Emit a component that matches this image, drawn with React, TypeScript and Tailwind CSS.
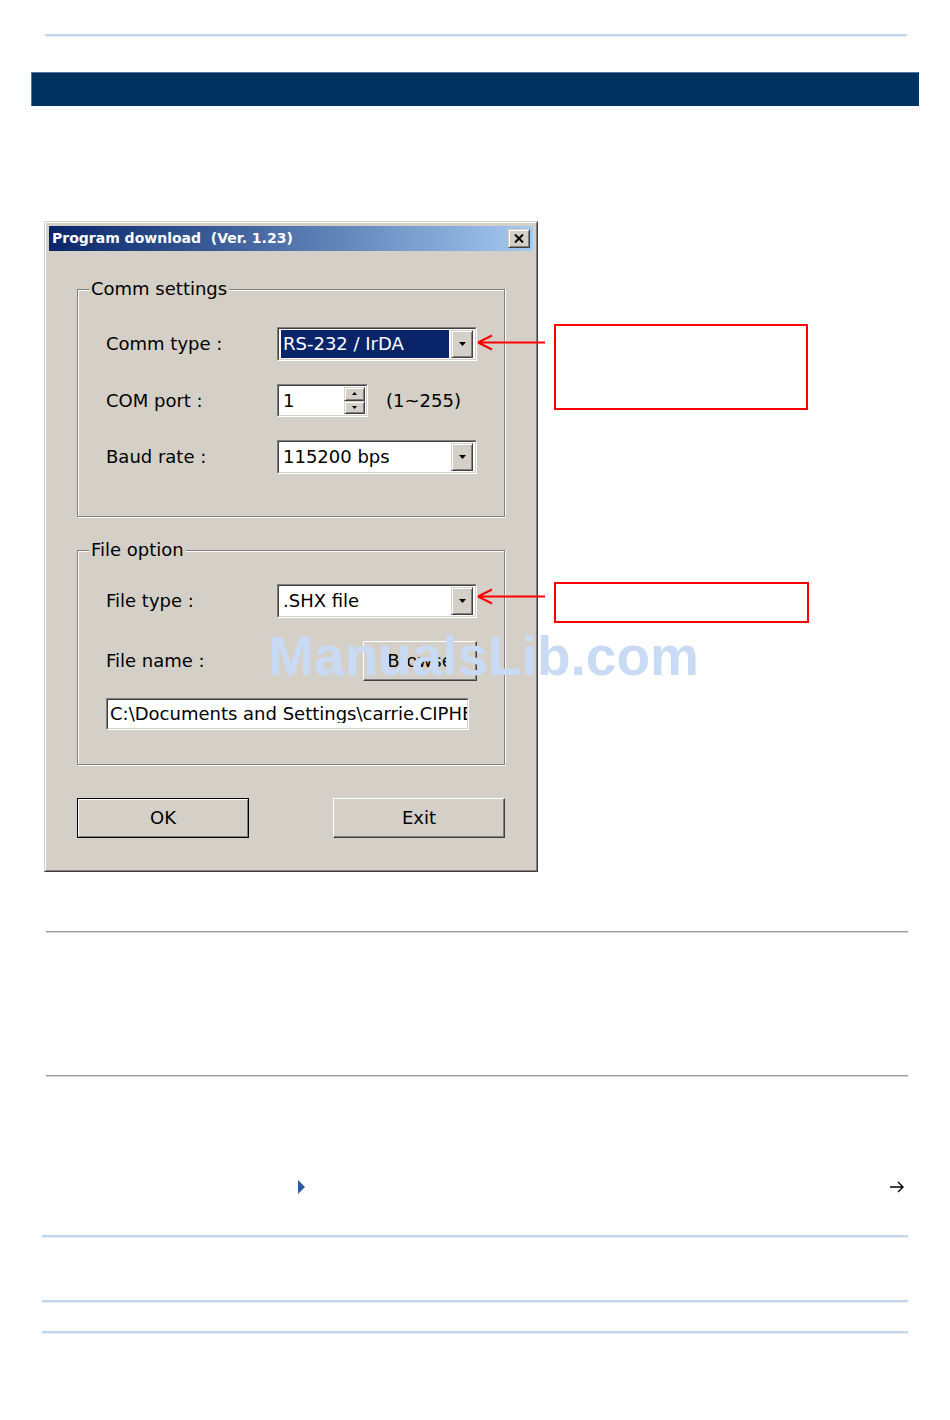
import type { ReactNode } from 'react';

const dlgFont = "font-['DejaVu_Sans',sans-serif] text-[18px] leading-none text-black";
const raised =
  'border border-t-[#d4d0c8] border-l-[#d4d0c8] border-r-[#404040] border-b-[#404040] shadow-[inset_1px_1px_0_#fff,inset_-1px_-1px_0_#808080] bg-[#d4d0c8]';
const raisedBtn =
  'border border-t-white border-l-white border-r-[#404040] border-b-[#404040] shadow-[inset_-1px_-1px_0_#808080] bg-[#d4d0c8]';

function Sunken({ className, children }: { className: string; children: ReactNode }) {
  return (
    <div className={`border border-t-[#808080] border-l-[#808080] border-r-white border-b-white ${className}`}>
      <div className="h-full border border-t-[#404040] border-l-[#404040] border-r-[#d4d0c8] border-b-[#d4d0c8] bg-white flex items-center">
        {children}
      </div>
    </div>
  );
}

function DownArrow() {
  return (
    <svg width="7" height="4" viewBox="0 0 7 4">
      <path d="M0 0h7L3.5 4z" fill="#000" />
    </svg>
  );
}

function Combo({ value, selected }: { value: string; selected?: boolean }) {
  return (
    <Sunken className="w-[200px] h-[34px]">
      <div className="flex h-full w-full p-[1px] pl-[2px] pr-[2px]">
        <div
          className={`flex-1 flex items-center pl-[2px] ${selected ? 'bg-[#0a246a] text-white' : 'text-black'}`}
        >
          {value}
        </div>
        <div className={`ml-[2px] w-[22px] h-full flex items-center justify-center ${raised}`}>
          <DownArrow />
        </div>
      </div>
    </Sunken>
  );
}

function Spinner() {
  return (
    <Sunken className="w-[91px] h-[33px]">
      <div className="flex h-full w-full p-[1px]">
        <div className="flex-1 flex items-center pl-[3px]">1</div>
        <div className="w-[21px] h-full flex flex-col">
          <div className={`flex-1 flex items-center justify-center ${raised}`}>
            <svg width="5" height="3" viewBox="0 0 5 3">
              <path d="M2.5 0L5 3H0z" fill="#000" />
            </svg>
          </div>
          <div className={`flex-1 flex items-center justify-center ${raised}`}>
            <svg width="5" height="3" viewBox="0 0 5 3">
              <path d="M0 0h5L2.5 3z" fill="#000" />
            </svg>
          </div>
        </div>
      </div>
    </Sunken>
  );
}

function Group({ label, height, top, children }: { label: string; height: string; top: string; children: ReactNode }) {
  return (
    <div
      className={`relative w-[428px] ${height} ${top} border border-[#808080] shadow-[inset_1px_1px_0_#fff,1px_1px_0_#fff]`}
    >
      <span className="absolute -top-[11px] left-[11px] px-[2px] bg-[#d4d0c8] leading-[20px]">{label}</span>
      {children}
    </div>
  );
}

function Row({ label, children }: { label: string; children: ReactNode }) {
  return (
    <div className="flex items-center pl-[28px]">
      <div className="w-[171px]">{label}</div>
      {children}
    </div>
  );
}

function BlueRule({ className }: { className: string }) {
  return <div className={`h-[3px] border-t-2 border-[#c2d6ec] bg-[#e3edf8] ${className}`} />;
}

function GrayRule({ className }: { className: string }) {
  return <div className={`h-[2px] border-t border-[#9c9c9c] bg-[#d6d6d6] ${className}`} />;
}

export default function App() {
  return (
    <div className="relative w-[950px] h-[1420px] bg-white overflow-hidden">
      {/* header rule + title band */}
      <BlueRule className="mt-[34px] ml-[45px] w-[862px]" />
      <div className="mt-[35px] ml-[31px] w-[888px] h-[34px] bg-[#00325f] border-t border-l border-[#52769f]" />

      {/* dialog + callouts */}
      <div className="mt-[115px] flex">
        <div className="ml-[44px] w-[494px] h-[651px] border border-t-[#d4d0c8] border-l-[#d4d0c8] border-r-[#404040] border-b-[#404040]">
          <div className="h-full border border-t-white border-l-white border-r-[#808080] border-b-[#808080] bg-[#d4d0c8] px-[3px] pt-[3px]">
            {/* title bar */}
            <div className="h-[25px] flex items-center justify-between bg-linear-to-r from-[#0a246a] to-[#a6caf0] pl-[3px] pr-[3px]">
              <span className="font-['DejaVu_Sans',sans-serif] font-bold text-[14px] text-white whitespace-pre">
                Program download  (Ver. 1.23)
              </span>
              <div className={`w-[22px] h-[19px] flex items-center justify-center ${raised}`}>
                <svg width="10" height="9" viewBox="0 0 10 9">
                  <path d="M1 0.5l8 8M9 0.5l-8 8" stroke="#000" strokeWidth="2" />
                </svg>
              </div>
            </div>

            {/* body */}
            <div className={`pl-[28px] ${dlgFont}`}>
              <Group label="Comm settings" height="h-[228px]" top="mt-[38px]">
                <div className="pt-[37px] flex flex-col gap-[23px]">
                  <Row label="Comm type :">
                    <Combo value="RS-232 / IrDA" selected />
                  </Row>
                  <Row label="COM port :">
                    <Spinner />
                    <span className="ml-[18px]">(1~255)</span>
                  </Row>
                  <Row label="Baud rate :">
                    <Combo value="115200 bps" />
                  </Row>
                </div>
              </Group>

              <Group label="File option" height="h-[215px]" top="mt-[33px]">
                <div className="pt-[33px] flex flex-col">
                  <Row label="File type :">
                    <Combo value=".SHX file" />
                  </Row>
                  <div className="mt-[23px]">
                    <Row label="File name :">
                      <div className="w-[200px] flex justify-end">
                        <div className={`w-[114px] h-[40px] flex items-center justify-center ${raisedBtn}`}>Browse</div>
                      </div>
                    </Row>
                  </div>
                  <div className="mt-[17px] pl-[28px]">
                    <Sunken className="w-[363px] h-[32px]">
                      <span className="pl-[2px] whitespace-nowrap overflow-hidden">
                        C:\Documents and Settings\carrie.CIPHERLAB
                      </span>
                    </Sunken>
                  </div>
                </div>
              </Group>

              <div className="mt-[33px] w-[428px] flex justify-between">
                <div className="w-[172px] h-[40px] border border-black">
                  <div className="h-full border border-t-white border-l-white border-r-[#808080] border-b-[#808080] flex items-center justify-center">
                    OK
                  </div>
                </div>
                <div className={`w-[172px] h-[40px] flex items-center justify-center ${raisedBtn}`}>Exit</div>
              </div>
            </div>
          </div>
        </div>

        <div className="ml-[16px] flex flex-col">
          <div className="mt-[103px] w-[254px] h-[86px] border-2 border-[#ff0000]" />
          <div className="mt-[172px] w-[255px] h-[41px] border-2 border-[#ff0000]" />
        </div>
      </div>

      {/* lower rules */}
      <GrayRule className="mt-[59px] ml-[46px] w-[862px]" />
      <GrayRule className="mt-[142px] ml-[46px] w-[862px]" />

      <div className="mt-[103px] h-[14px] flex items-center">
        <svg className="ml-[298px]" width="7" height="14" viewBox="0 0 7 14">
          <path d="M0 0l7 7-7 7z" fill="#2b5c9a" />
        </svg>
        <svg className="ml-[584px]" width="16" height="12" viewBox="0 0 16 12">
          <path d="M1 6h13M9 1l5 5-5 5" stroke="#000" strokeWidth="1.4" fill="none" />
        </svg>
      </div>

      <BlueRule className="mt-[41px] ml-[42px] w-[866px]" />
      <BlueRule className="mt-[62px] ml-[42px] w-[866px]" />
      <BlueRule className="mt-[28px] ml-[42px] w-[866px]" />

      {/* callout arrows */}
      <svg className="absolute left-[470px] top-[330px]" width="80" height="280" viewBox="0 0 80 280">
        <g stroke="#ff0000" strokeWidth="2" fill="none">
          <path d="M8 12.5H75M8 12.5l14-7M8 12.5l14 7" />
          <path d="M8 266.5H75M8 266.5l14-7M8 266.5l14 7" />
        </g>
      </svg>

      {/* watermark */}
      <div className="absolute left-[268px] top-[629px] font-['Liberation_Sans',sans-serif] font-bold text-[55px] leading-none text-[#c9dbf4] whitespace-nowrap">
        ManualsLib.com
      </div>
    </div>
  );
}
